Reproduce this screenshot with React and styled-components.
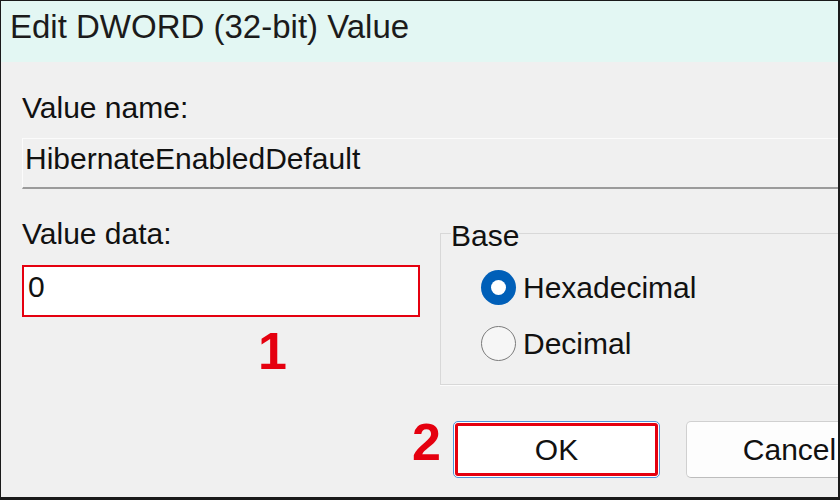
import React from 'react';
import styled, { createGlobalStyle } from 'styled-components';

const GlobalStyle = createGlobalStyle`
  * { box-sizing: border-box; }
  body {
    margin: 0;
    background: #f0f0f0;
    font-family: "Liberation Sans", Arial, sans-serif;
  }
`;

const RED = '#e5000f';

const Window = styled.div`
  width: 840px;
  height: 500px;
  overflow: hidden;
  border: 1px solid #1a1a1a;
  border-right-width: 2px;
  border-bottom-width: 3px;
  background: #f0f0f0;
`;

const Dialog = styled.div`
  width: 914px;
  display: flex;
  flex-direction: column;
`;

const TitleBar = styled.div`
  height: 61px;
  padding: 9px 0 0 9px;
  background: #e3f7f3;
  color: #1b1b1b;
  font-size: 33px;
  line-height: 1;
`;

const Body = styled.div`
  display: flex;
  flex-direction: column;
  padding: 0 22px 0 21px;
  color: #111;
  font-size: 30px;
  line-height: 1;
`;

const Label = styled.div`
  margin-top: ${(p) => p.$top || 0}px;
`;

const NameField = styled.div`
  margin-top: 15px;
  height: 51px;
  padding: 5px 2px;
  border-top: 1px solid #fbfbfb;
  border-left: 1px solid #fbfbfb;
  border-bottom: 2px solid #9b9b9b;
  background: #f0f0f0;
`;

const DataRow = styled.div`
  margin-top: 27px;
  display: flex;
  align-items: flex-start;
  gap: 20px;
`;

const DataColumn = styled.div`
  width: 398px;
  padding-top: 3px;
  display: flex;
  flex-direction: column;
`;

const DataInput = styled.div`
  margin-top: 16px;
  height: 52px;
  padding: 5px 4px;
  background: #fff;
  border: 2px solid ${RED};
`;

const Marker = styled.div`
  color: ${RED};
  font-size: 52px;
  font-weight: 700;
  line-height: 1;
  margin-left: ${(p) => p.$left || 0}px;
  margin-top: ${(p) => p.$top || 0}px;
  margin-right: ${(p) => p.$right || 0}px;
  align-self: flex-start;
`;

const BaseGroup = styled.fieldset`
  flex: 1;
  margin: 0;
  min-inline-size: 0;
  padding: 0 0 23px 10px;
  border: 1px solid #d8d8d8;
  border-right: none;
  box-shadow: 0 1px 0 #fbfbfb;

  legend {
    padding: 5px 0 0;
    line-height: 30px;
    font-size: 30px;
    color: #111;
  }
`;

const RadioRow = styled.div`
  display: flex;
  align-items: center;
  gap: 7px;
  height: 35px;
  margin-top: ${(p) => p.$top}px;
  margin-left: 30px;
`;

const Radio = styled.span`
  width: 35px;
  height: 35px;
  border-radius: 50%;
  flex-shrink: 0;
  display: flex;
  align-items: center;
  justify-content: center;
  background: ${(p) => (p.$checked ? '#005fb8' : '#f6f6f6')};
  border: ${(p) => (p.$checked ? 'none' : '1.5px solid #7b7b7b')};

  &::after {
    content: '';
    display: ${(p) => (p.$checked ? 'block' : 'none')};
    width: 15px;
    height: 15px;
    border-radius: 50%;
    background: #fff;
  }
`;

const ButtonRow = styled.div`
  margin-top: 36px;
  display: flex;
  justify-content: flex-end;
  align-items: center;
`;

const DialogButton = styled.div`
  width: 207px;
  height: 57px;
  margin-left: ${(p) => p.$gap || 0}px;
  display: flex;
  align-items: center;
  justify-content: center;
  background: ${(p) => (p.$focused ? '#fff' : '#fdfdfd')};
  border: 1px solid ${(p) => (p.$focused ? '#4f92d8' : '#d0d0d0')};
  border-bottom-color: ${(p) => (p.$focused ? '#4f92d8' : '#bdbdbd')};
  border-radius: 5px;
  color: #111;
  font-size: 30px;
  outline: ${(p) => (p.$focused ? `3px solid ${RED}` : 'none')};
  outline-offset: -5px;
`;

export default function App() {
  return (
    <>
      <GlobalStyle />
      <Window>
        <Dialog>
          <TitleBar>Edit DWORD (32-bit) Value</TitleBar>
          <Body>
            <Label $top={31}>Value name:</Label>
            <NameField>HibernateEnabledDefault</NameField>
            <DataRow>
              <DataColumn>
                <Label>Value data:</Label>
                <DataInput>0</DataInput>
                <Marker $left={236} $top={8}>1</Marker>
              </DataColumn>
              <BaseGroup>
                <legend>Base</legend>
                <RadioRow $top={19}>
                  <Radio $checked />
                  Hexadecimal
                </RadioRow>
                <RadioRow $top={21}>
                  <Radio />
                  Decimal
                </RadioRow>
              </BaseGroup>
            </DataRow>
            <ButtonRow>
              <Marker $top={-5} $right={12}>2</Marker>
              <DialogButton $focused>OK</DialogButton>
              <DialogButton $gap={26}>Cancel</DialogButton>
            </ButtonRow>
          </Body>
        </Dialog>
      </Window>
    </>
  );
}
